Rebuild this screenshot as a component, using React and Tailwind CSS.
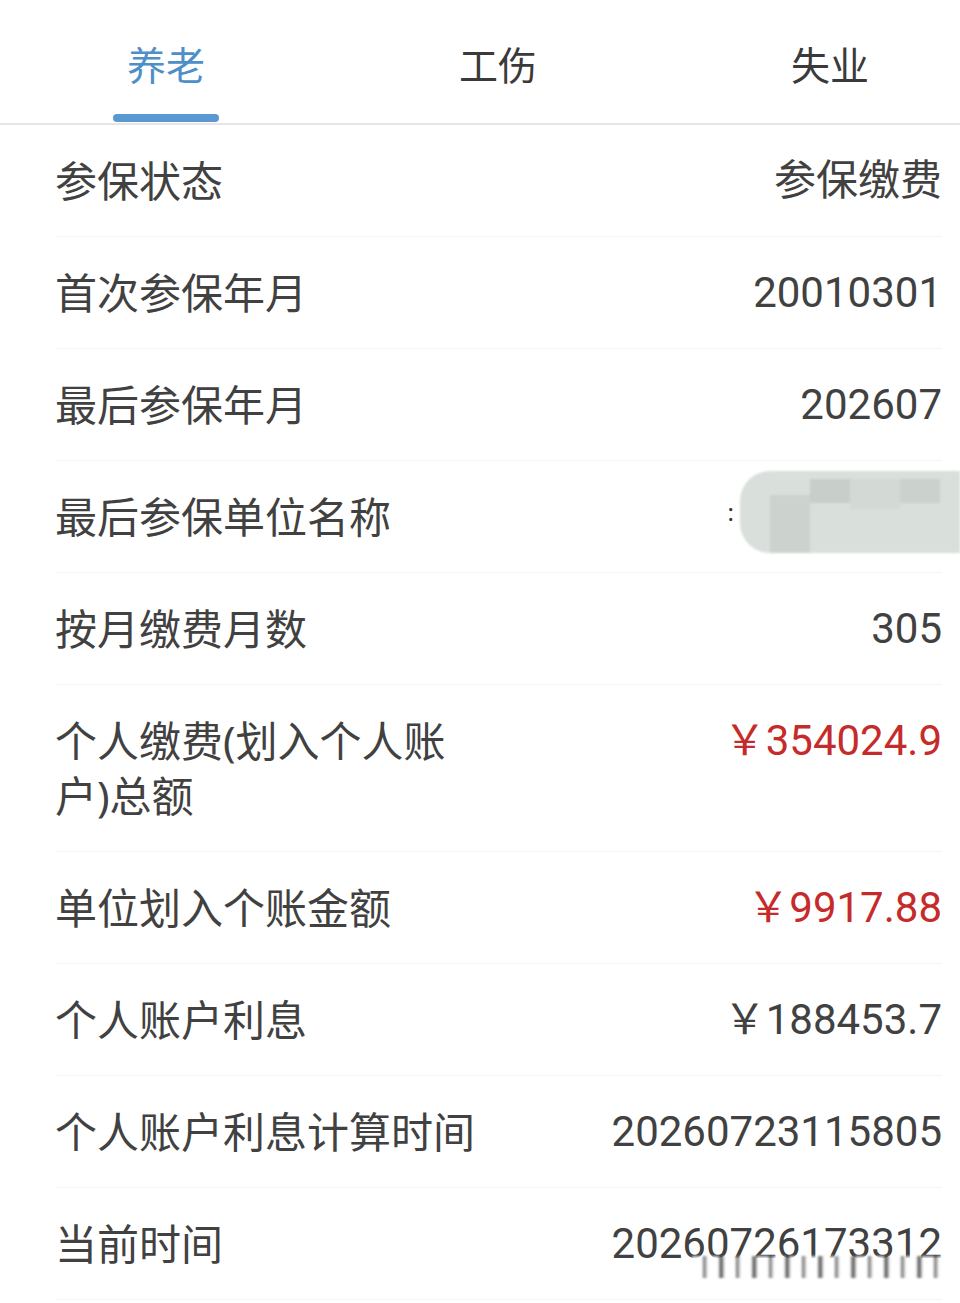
const rows = [
  { label: "参保状态", value: "参保缴费" },
  { label: "首次参保年月", value: "20010301" },
  { label: "最后参保年月", value: "202607" },
  { label: "最后参保单位名称", value: null, blurred: true },
  { label: "按月缴费月数", value: "305" },
  { label: "个人缴费(划入个人账户)总额", value: "￥354024.9", red: true },
  { label: "单位划入个账金额", value: "￥9917.88", red: true },
  { label: "个人账户利息", value: "￥188453.7" },
  { label: "个人账户利息计算时间", value: "20260723115805" },
  { label: "当前时间", value: "20260726173312", watermark: true },
];

const tabs = ["养老", "工伤", "失业"];

export default function App() {
  return (
    <div className="w-[960px] min-h-[1303px] bg-white overflow-hidden font-['Noto_Sans','Noto_Sans_CJK_SC',sans-serif]">
      {/* Tabs */}
      <div className="flex h-[125px] border-b-2 border-[#e6e6e6]">
        {tabs.map((t, i) => (
          <div key={t} className="w-[332px] shrink-0 relative flex items-center justify-center">
            <span
              className={
                "text-[39px] leading-none mt-[6px] " +
                (i === 0 ? "text-[#4e8fc8]" : "text-[#3a3a3a]")
              }
            >
              {t}
            </span>
            {i === 0 && (
              <div className="absolute bottom-[1px] left-[113px] w-[106px] h-[8px] rounded-full bg-[#5b97d1]"></div>
            )}
          </div>
        ))}
      </div>

      {/* Rows */}
      <div className="pl-[55px] pr-[18px]">
        {rows.map((r) => (
          <div
            key={r.label}
            className="relative flex items-start justify-between py-[28px] border-b border-[#f4f4f4] text-[42px] leading-[55px] text-[#414141]"
          >
            <div className="max-w-[425px]">{r.label}</div>
            {r.blurred ? (
              <div className="absolute right-[-18px] top-[10px] flex items-center">
                <span className="text-[24px] text-[#333] mr-[6px] leading-none">:</span>
                <div className="w-[220px] h-[82px] rounded-l-[30px] bg-[#d9dfdb] blur-[1px] flex">
                  <div className="w-[30px] h-full"></div>
                  <div className="w-[40px] h-[58px] mt-[24px] bg-[#ccd3cf]"></div>
                  <div className="w-[40px] h-[24px] mt-[8px] bg-[#c8cfca]"></div>
                  <div className="w-[50px] h-[30px] mt-[8px] bg-[#d3d9d5]"></div>
                  <div className="w-[40px] h-[24px] mt-[8px] bg-[#cbd1cd]"></div>
                </div>
              </div>
            ) : (
              <div
                className={
                  "whitespace-nowrap font-['Roboto','Noto_Sans_CJK_SC',sans-serif] " +
                  (r.red ? "text-[#c62b2b]" : "")
                }
              >
                {r.value}
              </div>
            )}
            {r.watermark && (
              <div className="absolute right-[0px] top-[68px] w-[250px] h-[22px] opacity-80 blur-[1px] bg-[repeating-linear-gradient(90deg,#ffffff_0px,#ffffff_10px,#555555_12px,#ffffff_16px,#ffffff_26px,#222222_29px,#ffffff_33px)]"></div>
            )}
          </div>
        ))}
      </div>
    </div>
  );
}
